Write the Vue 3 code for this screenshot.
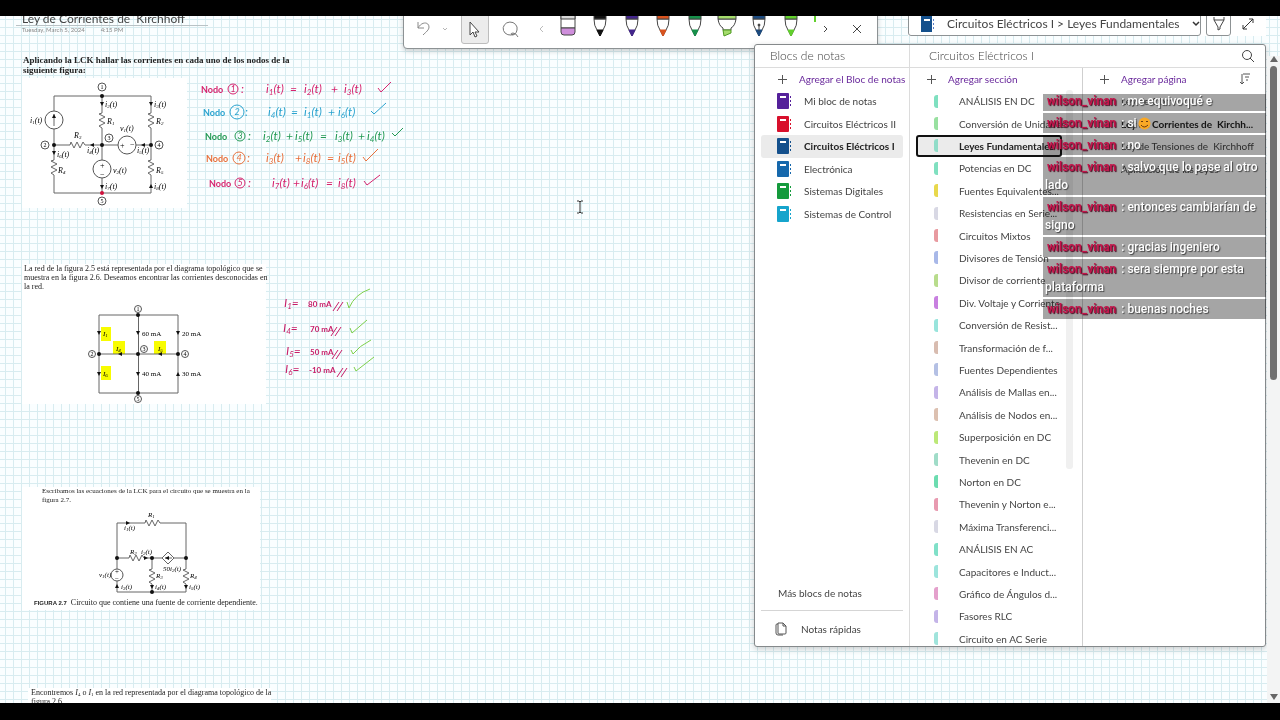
<template>
  <div class="screen">
    <main class="workspace">
      <div class="canvas">
        <header class="page-title">
          <h1>Ley de Corrientes de&nbsp; Kirchhoff</h1>
          <p><span>Tuesday, March 5, 2024</span><span>4:15 PM</span></p>
        </header>

        <p class="note statement">
          Aplicando la LCK hallar las corrientes en cada uno de los nodos de la siguiente figura:
        </p>

        <div class="note paste paste-nodes">
          <Circuit :fig="nodesFigure" />
        </div>

        <div class="note paste paste-topology">
          <p>
            La red de la figura 2.5 está representada por el diagrama topológico que se<br />
            muestra en la figura 2.6. Deseamos encontrar las corrientes desconocidas en<br />
            la red.
          </p>
          <Circuit :fig="topologyFigure" />
        </div>

        <div class="note paste paste-source">
          <p>Escribamos las ecuaciones de la LCK para el circuito que se muestra en la<br />figura 2.7.</p>
          <Circuit :fig="sourceFigure" />
          <p class="caption"><b>FIGURA 2.7</b> Circuito que contiene una fuente de corriente dependiente.</p>
        </div>

        <div class="note paste paste-next">
          <p>
            Encontremos <i>I</i><sub>4</sub> o <i>I</i><sub>1</sub> en la red representada por el diagrama
            topológico de la<br />figura 2.6.
          </p>
        </div>

        <svg class="note ink" viewBox="195 75 215 310" width="215" height="310">
          <g v-for="row in equations" :key="row.n" :fill="row.color" :stroke="row.color">
            <text class="hand word" :x="row.x" :y="row.y">Nodo</text>
            <circle :cx="row.cx" :cy="row.y - 4" :r="row.r" fill="none" />
            <text class="hand small" :x="row.cx" :y="row.y - 1" text-anchor="middle">{{ row.n }}</text>
            <text class="hand" :x="row.cx + 8" :y="row.y">:</text>
            <text v-for="part in row.parts" :key="part[0]" class="hand" :x="part[0]" :y="row.y">{{ part[1] }}<tspan v-if="part[2]" class="sub" dy="2">{{ part[2] }}</tspan><tspan v-if="part[2]" dy="-2">(t)</tspan></text>
            <path :d="row.check" fill="none" />
          </g>
          <g v-for="row in answers" :key="row.sub" fill="#c81e68" stroke="#c81e68">
            <text class="hand" :x="row.x" :y="row.y">I<tspan class="sub" dy="2">{{ row.sub }}</tspan><tspan dy="-2">=</tspan></text>
            <text class="hand mid" :x="row.vx" :y="row.y">{{ row.value }}</text>
            <path :d="`M${row.sx} ${row.y + 4}l6 -9m-2 9l6 -9`" fill="none" />
            <path :d="row.check" fill="none" stroke="#7ed04b" />
          </g>
        </svg>

        <svg class="note caret" viewBox="0 0 8 14" width="8" height="14" fill="none" stroke="#333">
          <path d="M1 1h2l1 1l1 -1h2M4 2v10M1 13h2l1 -1l1 1h2" />
        </svg>
      </div>

      <div class="toolbar">
        <button class="tool" aria-label="Deshacer">
          <svg width="18" height="18" viewBox="0 0 18 18" fill="none" stroke="#8a8a8a"><path d="M3 2v6h6M3 8C7 1 14 2 14 7c0 3-3 5-6 8" /></svg>
        </button>
        <button class="tool narrow" aria-label="Más opciones">
          <svg width="6" height="6" viewBox="0 0 6 6" fill="none" stroke="#b5b5b5"><path d="M1 2l2 2l2 -2" /></svg>
        </button>
        <button class="tool selected" aria-label="Seleccionar">
          <svg width="16" height="18" viewBox="0 0 16 18" fill="#fff" stroke="#444"><path d="M3 2v13l3 -3l2 5l2 -1l-2 -4h4z" /></svg>
        </button>
        <button class="tool" aria-label="Lazo">
          <svg width="18" height="18" viewBox="0 0 18 18" fill="none" stroke="#777"><path d="M12 14A7 6.500 0 1 1 15 10Q14 15 10 15Q8 13 11 13Q14 13 16 17" /></svg>
        </button>
        <button class="tool arrow" aria-label="Anterior">
          <svg width="6" height="8" viewBox="0 0 6 8" fill="none" stroke="#bbb"><path d="M4 1l-3 3l3 3" /></svg>
        </button>
        <button v-for="pen in pens" :key="pen.name" class="tool pen" :aria-label="pen.name">
          <svg width="20" height="22" viewBox="0 0 20 22" stroke="#444">
            <template v-if="pen.kind === 'eraser'">
              <path d="M3 -1h14v13h-14z" fill="#fff" />
              <path d="M3 -1h14v4h-14z" fill="#d8d8d8" />
              <path d="M3 12h14v4q0 3 -3 3h-8q-3 0 -3 -3z" fill="#cf8fdc" />
            </template>
            <template v-else-if="pen.kind === 'marker'">
              <path d="M1 3q1 7 5 9v2h8v-2q4 -2 5 -9z" fill="#fff" />
              <path d="M1 -1h18v4h-18z" :fill="pen.color" />
              <path d="M6 14h8v3l-7 3z" :fill="pen.color" stroke="#4e9a20" />
            </template>
            <template v-else>
              <path d="M4 3q0 7 3 11l3 6l3 -6q3 -4 3 -11z" fill="#fff" />
              <path d="M4 -1h12v4h-12z" :fill="pen.color" />
              <path d="M7 14l3 6l3 -6z" :fill="pen.color" :stroke="pen.color" />
              <path v-if="pen.kind === 'fountain'" d="M10 15v-6m-1 0a1 1 0 1 0 2 0a1 1 0 1 0 -2 0" fill="#222" />
            </template>
          </svg>
        </button>
        <span class="pen-edge"></span>
        <button class="tool narrow" aria-label="Siguiente">
          <svg width="6" height="8" viewBox="0 0 6 8" fill="none" stroke="#444"><path d="M1 1l3 3l-3 3" /></svg>
        </button>
        <button class="tool close" aria-label="Cerrar">
          <svg width="10" height="10" viewBox="0 0 10 10" fill="none" stroke="#444"><path d="M1 1l8 8M9 1l-8 8" /></svg>
        </button>
      </div>

      <div class="topright">
        <button class="crumb">
          <svg width="14" height="16" viewBox="0 0 14 16"><path fill="#14508c" d="M0 0h11v16h-11z" /><path fill="#fff" d="M3 3h6v2h-6z" /><path fill="#5b7fc7" d="M12 3h1v2h-1zM12 7h1v2h-1zM12 11h1v2h-1z" /></svg>
          <span>Circuitos Eléctricos I &gt; Leyes Fundamentales</span>
          <svg class="chevron" width="8" height="6" viewBox="0 0 8 6" fill="none" stroke="#333" stroke-width="1.500"><path d="M1 1l3 3l3 -3" /></svg>
        </button>
        <button class="draw" aria-label="Dibujar">
          <svg width="12" height="14" viewBox="0 0 12 14" fill="none" stroke="#444"><path d="M1 0v3l4 7v3l2 -1v-2l4 -7v-3M1 3h10" /></svg>
        </button>
        <button class="expand" aria-label="Expandir">
          <svg width="12" height="12" viewBox="0 0 12 12" fill="none" stroke="#333"><path d="M1 11l10 -10M7 1h4v4M1 7v4h4" /></svg>
        </button>
      </div>

      <section class="panel">
        <div class="column notebooks">
          <h2>Blocs de notas</h2>
          <button class="add"><Plus />Agregar el Bloc de notas</button>
          <ul>
            <li v-for="book in notebooks" :key="book.name">
              <button :class="{ active: book.active }">
                <svg width="14" height="16" viewBox="0 0 14 16"><rect width="12" height="16" rx="1" :fill="book.color" /><path fill="#fff" d="M3 3h6v2h-6z" /><path :fill="book.color" d="M13 3h1v2h-1zM13 7h1v2h-1zM13 11h1v2h-1z" /></svg>
                <span>{{ book.name }}</span>
              </button>
            </li>
          </ul>
          <div class="bottom">
            <button class="more">Más blocs de notas</button>
            <button class="quick">
              <svg width="12" height="14" viewBox="0 0 12 14" fill="none" stroke="#555"><path d="M3 1h5l3 3v7q0 1 -1 1h-6q-1 0 -1 -1zM8 1v3h3M3 2h-1q-1 0 -1 1v8q0 2 2 2h5" /></svg>
              <span>Notas rápidas</span>
            </button>
          </div>
        </div>

        <div class="detail">
          <div class="detail-head">
            <h2>Circuitos Eléctricos I</h2>
            <button aria-label="Buscar">
              <svg width="14" height="14" viewBox="0 0 14 14" fill="none" stroke="#444"><circle cx="6" cy="6" r="4.500" /><path d="M9 9l4 4" /></svg>
            </button>
          </div>
          <div class="detail-body">
            <div class="column sections">
              <button class="add"><Plus />Agregar sección</button>
              <ul>
                <li v-for="section in sections" :key="section[0]">
                  <button :class="{ active: section[2] }">
                    <i :style="{ background: section[1] }"></i>
                    <span>{{ section[0] }}</span>
                  </button>
                </li>
              </ul>
              <span class="thumb"></span>
            </div>
            <div class="column pages">
              <div class="pages-head">
                <button class="add"><Plus />Agregar página</button>
                <button class="sort" aria-label="Ordenar">
                  <svg width="12" height="12" viewBox="0 0 12 12" fill="none" stroke="#555"><path d="M3 1v10M1 9l2 2l2 -2M4 1h7M6 4h4M7 7h2" /></svg>
                </button>
              </div>
              <ul>
                <li v-for="page in pages" :key="page.name">
                  <button :class="{ active: page.active }"><span>{{ page.name }}</span></button>
                </li>
              </ul>
            </div>
          </div>
        </div>
      </section>

      <div class="scrollbar">
        <span class="up"></span>
        <span class="bar"></span>
        <span class="down"></span>
      </div>

      <div class="chat">
        <p v-for="(msg, i) in messages" :key="i">
          <b>wilson_vinan</b> : {{ msg.text }}<svg v-if="msg.smile" width="13" height="13" viewBox="0 0 13 13"><circle cx="6.500" cy="6.500" r="6" fill="#f9a825" /><path d="M3 5q1 -2 2 0M8 5q1 -2 2 0M3 8q3 4 7 0" fill="none" stroke="#6b3a10" /></svg>
        </p>
      </div>
    </main>
  </div>
</template>

<script setup>
import { h } from 'vue'

const pens = [
  { name: 'Borrador', kind: 'eraser' },
  { name: 'Lápiz negro', color: '#111111' },
  { name: 'Lápiz morado', color: '#43258c' },
  { name: 'Lápiz naranja', color: '#d9531e' },
  { name: 'Lápiz verde', color: '#17904a' },
  { name: 'Marcador', kind: 'marker', color: '#a5dc6c' },
  { name: 'Pluma', kind: 'fountain', color: '#1b4a80' },
  { name: 'Lápiz lima', color: '#62d02c' }
]

const notebooks = [
  { name: 'Mi bloc de notas', color: '#54209a' },
  { name: 'Circuitos Eléctricos II', color: '#d8102c' },
  { name: 'Circuitos Eléctricos I', color: '#14508c', active: true },
  { name: 'Electrónica', color: '#1668ac' },
  { name: 'Sistemas Digitales', color: '#149a3c' },
  { name: 'Sistemas de Control', color: '#16a4cc' }
]

const sections = [
  ['ANÁLISIS EN DC', '#7fe0c0'],
  ['Conversión de Unidades', '#98e0a0'],
  ['Leyes Fundamentales', '#90dcc8', true],
  ['Potencias en DC', '#80e0c0'],
  ['Fuentes Equivalentes...', '#e8d84c'],
  ['Resistencias en Serie...', '#d8d8e4'],
  ['Circuitos Mixtos', '#e89aa0'],
  ['Divisores de Tensión', '#a8b8e8'],
  ['Divisor de corriente', '#b8dc8c'],
  ['Div. Voltaje y Corriente', '#c880e0'],
  ['Conversión de Resist...', '#98e4dc'],
  ['Transformación de f...', '#d8bcb0'],
  ['Fuentes Dependientes', '#b4c0e4'],
  ['Análisis de Mallas en...', '#c4b4e8'],
  ['Análisis de Nodos en...', '#dcc0b0'],
  ['Superposición en DC', '#bce878'],
  ['Thevenin en DC', '#a0dcc8'],
  ['Norton en DC', '#6cdcb0'],
  ['Thevenin y Norton e...', '#e89ab0'],
  ['Máxima Transferenci...', '#d8d8e4'],
  ['ANÁLISIS EN AC', '#80e0c8'],
  ['Capacitores e Induct...', '#9ce4dc'],
  ['Gráfico de Ángulos d...', '#e4a0cc'],
  ['Fasores RLC', '#c4b4e8'],
  ['Circuito en AC Serie', '#a0e4dc']
]

const pages = [
  { name: 'Ley de Ohm' },
  { name: 'Ley de Corrientes de\u00a0 Kirchh...', active: true },
  { name: 'Ley de Tensiones de\u00a0 Kirchhoff' },
  { name: 'Aplicación de las leyes' }
]

const messages = [
  { text: 'me equivoqué e' },
  { text: 'si', smile: true },
  { text: 'no' },
  { text: 'salvo que lo pase al otro lado' },
  { text: 'entonces cambiarían de signo' },
  { text: 'gracias ingeniero' },
  { text: 'sera siempre por esta plataforma' },
  { text: 'buenas noches' }
]

const equations = [
  {
    n: 1, x: 201, y: 93, cx: 233, r: 5, color: '#d6246e', check: 'M378 88l3 4l10 -10',
    parts: [[266, 'i', '1'], [290, '='], [304, 'i', '2'], [331, '+'], [344, 'i', '3']]
  },
  {
    n: 2, x: 203, y: 116, cx: 237, r: 7, color: '#2aa3cf', check: 'M371 111l3 3l12 -11',
    parts: [[268, 'i', '4'], [291, '='], [304, 'i', '1'], [328, '+'], [338, 'i', '6']]
  },
  {
    n: 3, x: 205, y: 140, cx: 240, r: 5, color: '#249a55', check: 'M392 133l3 3l8 -8',
    parts: [[263, 'i', '2'], [286, '+'], [295, 'i', '5'], [320, '='], [335, 'i', '3'], [358, '+'], [367, 'i', '4']]
  },
  {
    n: 4, x: 206, y: 162, cx: 239, r: 6, color: '#e8703c', check: 'M363 157l3 4l12 -12',
    parts: [[266, 'i', '3'], [295, '+'], [303, 'i', '8'], [327, '='], [338, 'i', '5']]
  },
  {
    n: 5, x: 209, y: 187, cx: 240, r: 5, color: '#d6246e', check: 'M364 181l3 4l13 -10',
    parts: [[272, 'i', '7'], [293, '+'], [301, 'i', '6'], [326, '='], [338, 'i', '8']]
  }
]

const answers = [
  { sub: '1', x: 284, y: 307, vx: 308, value: '80 mA', sx: 333, check: 'M347 302l2 6q6 -14 21 -19' },
  { sub: '4', x: 283, y: 332, vx: 310, value: '70 mA', sx: 331, check: 'M350 328l2 5l15 -13' },
  { sub: '5', x: 286, y: 355, vx: 310, value: '50 mA', sx: 332, check: 'M351 350l2 4q6 -8 18 -14' },
  { sub: '6', x: 285, y: 373, vx: 309, value: '-10 mA', sx: 337, check: 'M354 367l2 4l18 -14' }
]

// resistors, starting at their left or upper end
const zigH = (x, y) => `M${x} ${y}l1 -3l3 6l3 -6l3 6l3 -6l2 3`
const zigV = (x, y) => `M${x} ${y}l-3 1l6 3l-6 3l6 3l-6 3l3 2`
const arrow = (x, y, dir) => ({
  down: `M${x - 2} ${y - 2}h4l-2 4z`,
  up: `M${x - 2} ${y + 2}h4l-2 -4z`,
  left: `M${x + 2} ${y - 2}v4l-4 -2z`,
  right: `M${x - 2} ${y - 2}v4l4 -2z`
}[dir])

const nodesFigure = {
  box: [22, 78, 165, 130],
  wires: [
    'M54 111V96H151V113M54 129V160M54 175V193H151V175M151 128V160M102 96V113M102 128V160M102 178V193',
    'M54 145H70M85 145H118M136 145H151M54 126V114',
    zigH(70, 145), zigV(102, 113), zigV(151, 113), zigV(54, 160), zigV(151, 160)
  ],
  rings: [[54, 120, 9], [127, 145, 9], [102, 169, 9]],
  dots: [[102, 96], [54, 145], [102, 145], [151, 145], [102, 193, '#d0103c']],
  arrows: [arrow(54, 116, 'up'), arrow(102, 104, 'down'), arrow(151, 104, 'down'), arrow(54, 153, 'down'),
    arrow(92, 145, 'left'), arrow(143, 145, 'left'), arrow(102, 187, 'down'), arrow(151, 186, 'up')],
  nodes: [[102, 87, 1], [45, 145, 2], [109, 138, 3], [159, 145, 4], [102, 201, 5]],
  size: 8,
  labels: [
    [30, 123, 'i', '1', '(t)'], [105, 107, 'i', '2', '(t)'], [154, 107, 'i', '3', '(t)'],
    [107, 124, 'R', '1'], [156, 124, 'R', '2'], [74, 138, 'R', '3'], [58, 173, 'R', '4'], [156, 173, 'R', '5'],
    [120, 131, 'v', '1', '(t)'], [113, 173, 'v', '2', '(t)'], [87, 153, 'i', '4', '(t)'], [137, 153, 'i', '5', '(t)'],
    [57, 157, 'i', '6', '(t)'], [105, 189, 'i', '7', '(t)'], [154, 189, 'i', '8', '(t)'],
    [120, 148, '+'], [130, 147, '−'], [100, 168, '+'], [100, 177, '−']
  ]
}

const topologyFigure = {
  box: [24, 300, 240, 104],
  marks: [[101, 327, 10, 14], [113, 341, 12, 13], [154, 341, 12, 13], [101, 366, 10, 14]],
  wires: ['M99 315H178V393H99zM99 354H178M138.500 315V393'],
  dots: [[138, 315], [99, 354], [138, 354], [178, 354], [138, 393]],
  arrows: [arrow(99, 333, 'down'), arrow(99, 374, 'down'), arrow(138, 333, 'down'), arrow(178, 333, 'down'),
    arrow(120, 354, 'left'), arrow(160, 354, 'left'), arrow(138, 374, 'down'), arrow(178, 374, 'up')],
  nodes: [[138, 309, 1], [92, 354, 2], [144, 349, 3], [185, 354, 4], [138, 399, 5]],
  size: 7,
  labels: [
    [103, 336, 'I', '1'], [116, 351, 'I', '4'], [158, 351, 'I', '5'], [103, 376, 'I', '6'],
    [142, 336, '60 mA'], [182, 336, '20 mA'], [142, 376, '40 mA'], [182, 376, '30 mA']
  ]
}

const sourceFigure = {
  box: [34, 508, 214, 90],
  wires: [
    'M117 569V523H145M160 523H186V569M117 558H129M144 558H162M174 558H186M117 581V592H186V584M152 558V569M152 584V592',
    'M162 558l6 -6l6 6l-6 6zM172 558H165',
    zigH(145, 523), zigH(129, 558), zigV(152, 569), zigV(186, 569)
  ],
  rings: [[117, 575, 6]],
  dots: [[117, 558], [152, 558], [186, 558], [152, 592]],
  arrows: [arrow(128, 523, 'right'), arrow(146, 558, 'right'), arrow(167, 558, 'left'), arrow(117, 586, 'up'),
    arrow(152, 587, 'down'), arrow(186, 587, 'down')],
  nodes: [],
  size: 7,
  labels: [
    [148, 517, 'R', '1'], [124, 530, 'i', '1', '(t)'], [130, 554, 'R', '2'], [141, 554, 'i', '2', '(t)'],
    [163, 571, '50i', '2', '(t)'], [99, 577, 'v', '1', '(t)'], [156, 578, 'R', '3'], [190, 578, 'R', '4'],
    [121, 589, 'i', '3', '(t)'], [155, 589, 'i', '4', '(t)'], [189, 589, 'i', '5', '(t)'],
    [115, 574, '+'], [115, 581, '−']
  ]
}

function Circuit ({ fig }) {
  const [, , width, height] = fig.box
  const slant = (label) => label[3] ? 'italic' : 'normal'
  return h('svg', { viewBox: fig.box.join(' '), width, height, style: { display: 'block' } }, [
    ...(fig.marks || []).map((m) => h('rect', { x: m[0], y: m[1], width: m[2], height: m[3], fill: '#f8fc00' })),
    ...fig.wires.map((d) => h('path', { d, fill: 'none', stroke: '#666' })),
    ...(fig.rings || []).map((r) => h('circle', { cx: r[0], cy: r[1], r: r[2], fill: 'none', stroke: '#555' })),
    ...fig.dots.map((p) => h('circle', { cx: p[0], cy: p[1], r: 2, fill: p[2] || '#111' })),
    ...fig.arrows.map((d) => h('path', { d, fill: '#111' })),
    ...fig.nodes.map((n) => h('g', [
      h('circle', { cx: n[0], cy: n[1], r: fig.size / 2, fill: 'none', stroke: '#555' }),
      h('text', { x: n[0], y: n[1] + 2, 'font-size': 6, 'text-anchor': 'middle' }, n[2])
    ])),
    ...fig.labels.map((l) => h('text', {
      x: l[0], y: l[1], 'font-size': fig.size, 'font-style': slant(l)
    }, [l[2], l[3] && h('tspan', { 'font-size': 5, dy: 1 }, l[3]), l[4] && h('tspan', { dy: -1 }, l[4])]))
  ])
}
Circuit.props = ['fig']

function Plus () {
  return h('svg', { width: 9, height: 9, viewBox: '0 0 9 9', fill: 'none', stroke: '#555' }, [
    h('path', { d: 'M4.500 0v9M0 4.500h9' })
  ])
}
</script>

<style>
body {
  margin: 0;
  background: #000;
}
</style>

<style scoped>
.screen {
  display: flex;
  flex-direction: column;
  box-sizing: border-box;
  height: 100vh;
  padding: 16px 0 17px;
  background: #000;
  color: #444;
  font: 10px/16px Lato, "Open Sans", sans-serif;
}
h1, h2, p, ul {
  margin: 0;
  padding: 0;
  font-weight: 400;
}
ul {
  list-style: none;
}
button {
  display: flex;
  align-items: center;
  padding: 0;
  border: 0;
  background: none;
  color: inherit;
  font: inherit;
  text-align: left;
  white-space: nowrap;
}
svg {
  flex: none;
}
.workspace {
  position: relative;
  flex: 1;
  min-height: 0;
  overflow: hidden;
}
.canvas {
  position: absolute;
  inset: 0;
  overflow: hidden;
  background-color: #fafeff;
  background-image:
    linear-gradient(to right, #d8ecf0 1px, transparent 1px),
    linear-gradient(to bottom, #d8ecf0 1px, transparent 1px);
  background-size: 8px 8px;
  background-position: 5px 3px;
}
.page-title {
  position: absolute;
  top: -3px;
  left: 16px;
  width: 192px;
}
.page-title h1 {
  padding-left: 6px;
  border-bottom: 1px solid #b9c2c5;
  font-size: 12px;
  line-height: 12px;
  white-space: nowrap;
}
.page-title p {
  display: flex;
  gap: 16px;
  padding-left: 6px;
  color: #888;
  font-size: 6px;
  line-height: 8px;
}

/* pasted clippings and ink */
.note {
  position: absolute;
}
.statement {
  top: 39px;
  left: 23px;
  width: 272px;
  color: #222;
  font: bold 9px/10px "Liberation Serif", serif;
}
.paste {
  background: #fff;
  color: #222;
  font: 8px/9px "Liberation Serif", serif;
}
.paste p {
  white-space: nowrap;
}
.paste-nodes {
  top: 62px;
  left: 22px;
}
.paste-topology {
  top: 248px;
  left: 22px;
  width: 240px;
  padding: 0 2px;
}
.paste-topology p {
  padding-bottom: 9px;
}
.paste-source {
  top: 471px;
  left: 22px;
  width: 226px;
  padding: 0 0 2px 12px;
}
.paste-source p {
  padding: 0 0 3px 8px;
  font-size: 7px;
}
.paste-source .caption {
  padding: 0;
  font-size: 8px;
}
.caption b {
  margin-right: 2px;
  font: bold 6px/9px "Liberation Sans", sans-serif;
}
.paste-next {
  top: 672px;
  left: 28px;
  width: 240px;
  padding-left: 3px;
}
.paste-next sub {
  font-size: 5px;
  line-height: 0;
  vertical-align: -1px;
}
.ink {
  top: 59px;
  left: 195px;
}
.hand {
  stroke: none;
  font: italic 12px Lato, sans-serif;
}
.hand.word {
  font: bold 9px Lato, sans-serif;
}
.hand.small {
  font-size: 9px;
}
.hand.mid {
  font: bold 8px Lato, sans-serif;
}
.sub {
  font-size: 8px;
}
.caret {
  top: 184px;
  left: 576px;
}

.toolbar {
  position: absolute;
  top: -4px;
  left: 403px;
  display: flex;
  box-sizing: border-box;
  width: 475px;
  height: 37px;
  padding: 0 4px;
  border: 1px solid #8d9294;
  border-radius: 4px;
  background: #fff;
  box-shadow: 0 2px 5px #0003;
}
.tool {
  justify-content: center;
  width: 32px;
  height: 31px;
}
.tool.narrow {
  width: 10px;
}
.tool.arrow {
  width: 16px;
  margin: 0 2px 0 7px;
}
.tool.selected {
  box-sizing: border-box;
  width: 28px;
  margin: 0 6px 0 11px;
  border: 1px solid #bdbdbd;
  border-radius: 3px;
  background: #ececec;
}
.tool.pen {
  align-items: flex-start;
  padding-top: 3px;
}
.tool.close {
  margin-left: 10px;
}
.pen-edge {
  width: 2px;
  height: 6px;
  margin: 3px 5px 0 7px;
  background: #62d02c;
}

.topright {
  position: absolute;
  top: -4px;
  right: 14px;
  display: flex;
  gap: 5px;
  background: #fff;
}
.topright button {
  box-sizing: border-box;
  height: 24px;
  justify-content: center;
  border: 1px solid #8d9294;
  border-radius: 3px;
}
.topright .crumb {
  justify-content: flex-start;
  width: 293px;
  gap: 12px;
  padding: 0 8px 0 12px;
  font-size: 12px;
}
.topright .chevron {
  margin-left: auto;
}
.topright .draw {
  width: 25px;
}
.topright .expand {
  width: 30px;
  padding-right: 6px;
  border: 0;
}

.panel {
  position: absolute;
  top: 28px;
  right: 14px;
  display: flex;
  box-sizing: border-box;
  width: 512px;
  height: 603px;
  overflow: hidden;
  border: 1px solid #85898b;
  border-radius: 3px;
  background: #fff;
  box-shadow: 0 2px 6px #0003;
}
.panel h2 {
  flex: 1;
  font-size: 12px;
  font-weight: 300;
  line-height: 22px;
}
.column {
  display: flex;
  flex-direction: column;
}
.notebooks {
  flex: none;
  width: 154px;
  border-right: 1px solid #dcdcdc;
}
.notebooks h2 {
  flex: none;
  padding-left: 15px;
  border-bottom: 1px solid #dcdcdc;
}
.add {
  gap: 12px;
  flex: none;
  height: 22px;
  padding-left: 17px;
  color: #6a2a9c;
}
.notebooks .add {
  padding-left: 23px;
}
.column ul {
  display: grid;
  flex: none;
  grid-auto-rows: 1fr;
}
.column li {
  display: flex;
}
.column li button {
  flex: 1;
  box-sizing: border-box;
  border-radius: 3px;
}
.column li .active {
  background: #ebebeb;
  color: #222;
  font-weight: 700;
}
.notebooks ul {
  height: 135px;
  padding: 0 6px;
}
.notebooks li button {
  gap: 13px;
  padding-left: 16px;
}
.bottom {
  display: flex;
  flex-direction: column;
  margin: auto 6px 0;
}
.more {
  height: 36px;
  padding-left: 17px;
  border-bottom: 1px solid #d5d5d5;
}
.quick {
  gap: 14px;
  height: 35px;
  padding-left: 14px;
}
.detail {
  display: flex;
  flex: 1;
  flex-direction: column;
  min-width: 0;
}
.detail-head {
  display: flex;
  padding: 0 10px 0 19px;
  border-bottom: 1px solid #dcdcdc;
}
.detail-body {
  display: flex;
  flex: 1;
  min-height: 0;
}
.sections {
  position: relative;
  width: 172px;
  border-right: 1px solid #cfcfcf;
}
.sections ul {
  height: 560px;
  padding: 0 20px 0 6px;
}
.sections li {
  min-width: 0;
}
.sections li button {
  gap: 21px;
  min-width: 0;
  padding-left: 18px;
}
.sections li .active {
  padding-left: 16px;
  border: 2px solid #111;
}
.sections i {
  flex: none;
  width: 4px;
  height: 13px;
  border-radius: 3px 0 0 3px;
}
.thumb {
  position: absolute;
  top: 22px;
  right: 9px;
  width: 7px;
  height: 379px;
  border-radius: 3px;
  background: #f0f0f0;
  mix-blend-mode: multiply;
}
.pages {
  flex: 1;
  min-width: 0;
}
.pages-head {
  display: flex;
  justify-content: space-between;
  padding-right: 14px;
}
.pages ul {
  height: 90px;
}
.pages li button {
  padding-left: 38px;
}
.pages li .active {
  background: none;
}

.scrollbar {
  position: absolute;
  top: 40px;
  right: 0;
  bottom: 0;
  display: flex;
  flex-direction: column;
  align-items: center;
  width: 13px;
  background: #f3f4f4;
}
.up, .down {
  border: 4px solid transparent;
}
.up {
  margin-bottom: 4px;
  border-top-width: 0;
  border-bottom: 6px solid #666;
}
.down {
  margin: auto 0 3px;
  border-top: 6px solid #666;
  border-bottom-width: 0;
}
.bar {
  width: 7px;
  height: 314px;
  border-radius: 4px;
  background: #707070;
}

.chat {
  position: absolute;
  top: 78px;
  right: 14px;
  display: flex;
  flex-direction: column;
  justify-content: flex-end;
  gap: 2px;
  width: 223px;
  height: 225px;
  overflow: hidden;
  color: #fff;
  font: 500 12px/18px Roboto, sans-serif;
  text-shadow: 1px 1px 1px #444;
}
.chat p {
  flex: none;
  padding: 1px 2px;
  background: #0000005a;
  font-weight: 500;
}
.chat b {
  margin: 0 2px;
  color: #c4134a;
  font-weight: 700;
  text-shadow: 1px 1px 1px #4a0a20;
}
.chat svg {
  margin-left: 1px;
  vertical-align: middle;
}
</style>
